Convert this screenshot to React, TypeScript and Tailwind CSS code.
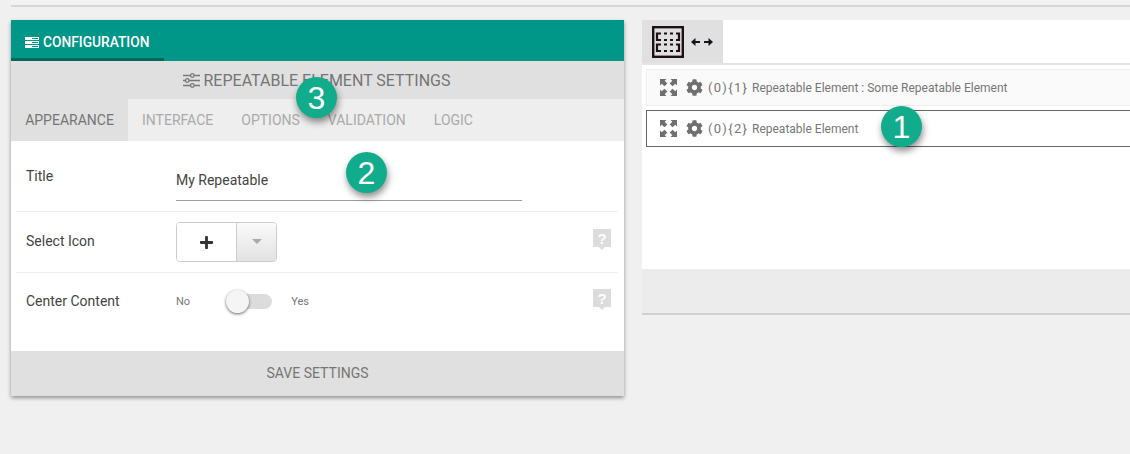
import { FaCog, FaPlus } from "react-icons/fa";

function Badge({ n, className }: { n: string; className: string }) {
  return (
    <div
      className={`absolute flex h-[41px] w-[41px] items-center justify-center rounded-full bg-[#10ac8c] text-[32px] leading-none text-white shadow-[1px_4px_7px_rgba(0,0,0,0.45)] font-['Liberation_Sans',sans-serif] ${className}`}
    >
      {n}
    </div>
  );
}

function ServerIcon() {
  return (
    <svg width="14" height="11" viewBox="0 0 14 11" className="shrink-0">
      <path fill="#fff" d="M0 0h14v3H0zM0 4h14v3H0zM0 8h14v3H0z" />
      <path fill="#009688" d="M7 1h6v1H7zM7 5h6v1H7zM7 9h6v1H7z" />
    </svg>
  );
}

function SlidersIcon() {
  return (
    <svg width="17" height="15" viewBox="0 0 17 15" fill="none" stroke="#777" strokeWidth="1.3" className="shrink-0">
      <path d="M0 2.500h7.500M11 2.500h6M0 7.500h2.500M6 7.500h11M0 12.500h7.500M11 12.500h6" />
      <circle cx="9.300" cy="2.500" r="1.800" />
      <circle cx="4.300" cy="7.500" r="1.800" />
      <circle cx="9.300" cy="12.500" r="1.800" />
    </svg>
  );
}

function RepeatIcon() {
  return (
    <svg width="32" height="32" viewBox="0 0 32 32" fill="none" className="shrink-0">
      <rect x="1.200" y="1.200" width="29.600" height="29.600" stroke="#1c1015" strokeWidth="2.400" />
      <path
        stroke="#1c1015"
        strokeWidth="2.200"
        d="M9 7.500H5V14H9M12 7.500h3M12 14h3M18 7.500h3M18 14h3M24 7.500h3V14H24M9 18.500H5V25H9M12 18.500h3M12 25h3M18 18.500h3M18 25h3M24 18.500h3V25H24"
      />
    </svg>
  );
}

function ArrowsIcon() {
  return (
    <svg width="22" height="10" viewBox="0 0 22 10" fill="#14141c" className="shrink-0">
      <path d="M0 5l4.500-4v3H9v2H4.500v3zM22 5l-4.500-4v3H13v2h4.500v3z" />
    </svg>
  );
}

function ExpandIcon() {
  return (
    <svg width="17" height="17" viewBox="0 0 17 17" fill="#6f6f6f" className="shrink-0">
      <path d="M0 0h6.500L4.700 1.800 7.300 4.400 4.400 7.300 1.800 4.700 0 6.500z" />
      <path d="M17 0h-6.500l1.800 1.800-2.600 2.600 2.900 2.900 2.600-2.600L17 6.500z" />
      <path d="M0 17h6.500l-1.800-1.800 2.600-2.600-2.900-2.900-2.600 2.600L0 10.500z" />
      <path d="M17 17h-6.500l1.800-1.800-2.600-2.600 2.900-2.900 2.600 2.600 1.800-1.800z" />
    </svg>
  );
}

function HelpIcon() {
  return (
    <div className="relative flex h-[18px] w-[18px] items-center justify-center bg-[#dcdcdc] text-[15px] font-bold leading-none text-white font-['Liberation_Sans',sans-serif]">
      ?
      <span className="absolute -bottom-[3px] left-[6px] h-0 w-0 border-x-[3px] border-t-[3px] border-x-transparent border-t-[#dcdcdc]" />
    </div>
  );
}

function TreeRow({ prefix, text, className }: { prefix: string; text: string; className: string }) {
  return (
    <div className={`flex items-center border-y border-l pl-[13px] text-[12px] text-[#777] ${className}`}>
      <ExpandIcon />
      <FaCog className="ml-[9px] h-[17px] w-[17px] shrink-0 text-[#6f6f6f]" />
      <span className="ml-[5px] w-[39px] shrink-0 whitespace-nowrap text-[13px] tracking-[1.3px]">{prefix}</span>
      <span className="ml-[5px]">{text}</span>
    </div>
  );
}

export default function App() {
  return (
    <div className="relative h-[454px] w-[1130px] overflow-hidden bg-[#f0f0f0] font-['Roboto',sans-serif]">
      <div className="ml-[11px] h-[7px] border-b-2 border-[#d6d6d6] bg-[#f2f2f2]" />

      <div className="mt-[13px] flex items-start gap-[18px] pl-[11px]">
        <section className="w-[613px] shrink-0 shadow-[0_2px_4px_rgba(0,0,0,0.4)]">
          <div className="h-[41px] bg-[#009688]">
            <div className="flex h-[41px] w-[153px] items-center gap-[4px] border-b-[3px] border-[#00695c] pl-[14px] pt-[6px] text-[13.75px] font-medium text-white">
              <ServerIcon />
              <span>CONFIGURATION</span>
            </div>
          </div>

          <div className="flex h-[38px] items-center justify-center gap-[4px] bg-[#e0e0e0] pr-[2px] pt-[1px] text-[16px] text-[#757575]">
            <SlidersIcon />
            <span>REPEATABLE ELEMENT SETTINGS</span>
          </div>

          <div className="flex h-[42px] items-center bg-[#eeeeee] text-[14px] text-[#aaa]">
            <div className="flex h-full w-[117px] items-center justify-center bg-[#e0e0e0] text-[#757575]">APPEARANCE</div>
            <span className="ml-[14px]">INTERFACE</span>
            <span className="ml-[28px]">OPTIONS</span>
            <span className="ml-[28px]">VALIDATION</span>
            <span className="ml-[28px]">LOGIC</span>
          </div>

          <div className="h-[210px] bg-white pl-[5px] pr-[6px] text-[14px] text-[#444]">
            <div className="relative h-[71px] border-b border-[#eeeeee] pl-[10px]">
              <div className="pt-[27px] leading-[16px]">Title</div>
              <div className="absolute left-[160px] top-[26px] h-[34px] w-[346px] border-b border-[#9e9e9e] pt-[5px] leading-[16px]">
                My Repeatable
              </div>
            </div>

            <div className="flex h-[61px] items-center border-b border-[#eeeeee] pl-[10px]">
              <div className="w-[150px] -translate-y-[1px]">Select Icon</div>
              <div className="flex h-[40px] w-[101px] overflow-hidden rounded-[4px] border border-[#ccc]">
                <div className="flex w-[59px] items-center justify-center bg-white">
                  <FaPlus className="h-[15px] w-[15px] text-[#333]" />
                </div>
                <div className="flex flex-1 items-center justify-center border-l border-[#ccc] bg-gradient-to-b from-[#fafafa] to-[#e2e2e2]">
                  <span className="mb-[2px] h-0 w-0 border-x-[5px] border-t-[5px] border-x-transparent border-t-[#aaa]" />
                </div>
              </div>
              <div className="ml-auto mr-[7px] -translate-y-[4px]"><HelpIcon /></div>
            </div>

            <div className="flex h-[78px] items-start pl-[10px] pt-[20px]">
              <div className="w-[150px] leading-[16px]">Center Content</div>
              <span className="pt-[2px] text-[11px] leading-[14px] text-[#777]">No</span>
              <div className="relative ml-[36px] mt-[1px] h-[15px] w-[46px] rounded-full bg-[#dcdcdc]">
                <span className="absolute left-0 top-[-4px] h-[23px] w-[23px] rounded-full bg-[#f5f5f5] shadow-[0_1px_3px_rgba(0,0,0,0.6)]" />
              </div>
              <span className="ml-[19px] pt-[2px] text-[11px] leading-[14px] text-[#777]">Yes</span>
              <div className="ml-auto mr-[7px] -mt-[4px]"><HelpIcon /></div>
            </div>
          </div>

          <div className="flex h-[45px] items-center justify-center bg-[#e0e0e0] text-[14px] text-[#757575]">SAVE SETTINGS</div>
        </section>

        <section className="min-w-0 flex-1 border-b-2 border-[#d0d0d0] bg-white">
          <div className="flex h-[45px] border-b-2 border-[#e4e4e4]">
            <div className="flex w-[81px] items-center gap-[7px] bg-[#e0e0e0] pl-[10px]">
              <RepeatIcon />
              <ArrowsIcon />
            </div>
          </div>
          <div className="flex h-[204px] flex-col gap-[4px] pl-[4px] pt-[4px]">
            <TreeRow className="h-[37px] border-[#eeeeee] bg-[#fafafa]" prefix="(0){1}" text="Repeatable Element : Some Repeatable Element" />
            <TreeRow className="h-[37px] border-[#666] bg-white" prefix="(0){2}" text="Repeatable Element" />
          </div>
          <div className="h-[44px] bg-[#ececec]" />
        </section>
      </div>

      <Badge n="1" className="left-[881px] top-[106px]" />
      <Badge n="2" className="left-[346px] top-[152px]" />
      <Badge n="3" className="left-[296px] top-[77px]" />
    </div>
  );
}
